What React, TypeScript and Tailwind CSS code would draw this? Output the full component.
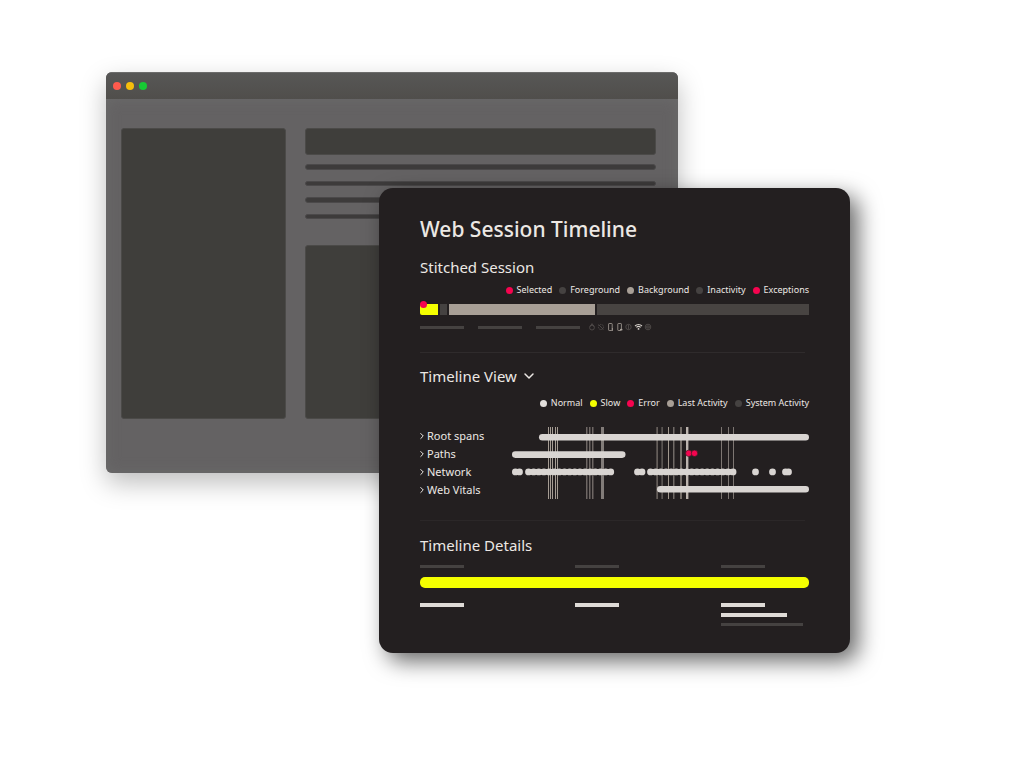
import { ChevronDown, ChevronRight } from "lucide-react";

const sessionLegend = [
  { label: "Selected", color: "bg-[#f5044f]" },
  { label: "Foreground", color: "bg-[#454241]" },
  { label: "Background", color: "bg-[#a89f96]" },
  { label: "Inactivity", color: "bg-[#454241]" },
  { label: "Exceptions", color: "bg-[#f5044f]" },
];

const timelineLegend = [
  { label: "Normal", color: "bg-[#e3dfdc]" },
  { label: "Slow", color: "bg-[#f4ff00]" },
  { label: "Error", color: "bg-[#f5044f]" },
  { label: "Last Activity", color: "bg-[#a89f96]" },
  { label: "System Activity", color: "bg-[#454241]" },
];

const tracks = ["Root spans", "Paths", "Network", "Web Vitals"];

// Vertical activity markers: x, width, color
const markers: [number, number, string][] = [
  [36, 1, "#a59c93"],
  [38, 1, "#a59c93"],
  [40, 1, "#a59c93"],
  [43, 1, "#a59c93"],
  [45, 1, "#a59c93"],
  [74, 1.5, "#6e6764"],
  [77, 1.5, "#6e6764"],
  [80, 1.5, "#6e6764"],
  [89, 3, "#827c79"],
  [144.5, 1.2, "#827a74"],
  [149.5, 1.2, "#716b67"],
  [156, 1, "#a1988e"],
  [161, 1.5, "#716b67"],
  [168, 2, "#756e69"],
  [174, 2.4, "#bcb4ae"],
  [209, 1, "#7d7672"],
  [216, 1, "#7d7672"],
  [221, 1, "#7d7672"],
];

// Centers of the network request beads
const beads = [
  3.4, 7.5,
  ...Array.from({ length: 17 }, (_, i) => 16.5 + i * 5.14),
  125.5, 130,
  ...Array.from({ length: 17 }, (_, i) => 138.5 + i * 5.16),
  243.5, 260.5, 273.5, 276.5,
];

const Legend = ({ items }: { items: { label: string; color: string }[] }) => (
  <ul className="flex justify-end gap-[7px] text-[9px] leading-3 whitespace-nowrap">
    {items.map((item) => (
      <li key={item.label} className="flex items-center gap-1">
        <span className={`size-[7px] rounded-full ${item.color}`} />
        {item.label}
      </li>
    ))}
  </ul>
);

const DeviceIcons = () => (
  <svg width="66" height="10" viewBox="0 0 66 10" fill="none" strokeWidth="0.8">
    <g stroke="#55514f">
      <path d="M2.2 4.6 4 1.6l2 3" />
      <circle cx="4" cy="5.6" r="2.4" />
      <circle cx="13" cy="5" r="2.6" strokeDasharray="1.4 0.8" />
      <path d="m10.5 2.5 5 5" />
      <circle cx="40.5" cy="5" r="2.7" />
      <path d="M40.5 2.6v4.8" />
      <circle cx="60" cy="5" r="2.8" />
      <path d="M58.8 4h2.4v2h-2.4z" />
    </g>
    <g stroke="#a9a29b">
      <rect x="20.6" y="1.5" width="3.6" height="7" rx="0.6" />
      <path d="M24.4 6v3" />
      <rect x="29.8" y="1.5" width="3.6" height="7" rx="0.6" />
      <path d="M32 7.6h2.4" strokeWidth="1.4" />
    </g>
    <path
      d="M47 4c2-1.9 5-1.9 7 0M48.4 5.4c1.2-1.1 3-1.1 4.2 0"
      stroke="#d6d0ca"
      strokeWidth="1.1"
    />
    <circle cx="50.5" cy="6.9" r="0.9" fill="#d6d0ca" />
  </svg>
);

const TimelineChart = () => (
  <svg viewBox="0 0 297 72" className="block w-full" aria-hidden="true">
    {markers.map(([x, width, color]) => (
      <rect key={x} x={x} y="0" width={width} height="72" fill={color} />
    ))}
    <g fill="#d9d5d2">
      <rect x="27" y="7" width="270" height="6.6" rx="3.3" />
      <rect x="0" y="24.3" width="113.5" height="6.6" rx="3.3" />
      <rect x="145" y="58.9" width="152" height="6.6" rx="3.3" />
      {beads.map((x) => (
        <circle key={x} cx={x} cy="44.9" r="3.4" />
      ))}
      {/* Join the beads of one burst */}
      <rect x="3" y="42" width="5" height="5.8" />
      <rect x="16" y="42" width="83" height="5.8" />
      <rect x="125" y="42" width="5" height="5.8" />
      <rect x="138" y="42" width="83" height="5.8" />
    </g>
    <g fill="#f5044f" stroke="#231f20" strokeWidth="0.6">
      <circle cx="176.8" cy="26.3" r="3.2" />
      <circle cx="182.5" cy="26.3" r="3.2" />
    </g>
  </svg>
);

const BrowserWindow = () => (
  <div className="col-start-1 col-end-3 row-start-1 row-end-3 flex flex-col overflow-hidden rounded-md bg-[#646263] shadow-[0_10px_26px_rgba(0,0,0,0.26)]">
    <div className="flex h-[27px] items-center gap-[5px] border-t border-[#6c6c6b] bg-linear-to-b from-[#575756] to-[#504e4b] px-[7px]">
      <span className="size-2 rounded-full bg-[#ff5a4d]" />
      <span className="size-2 rounded-full bg-[#f6bd0b]" />
      <span className="size-2 rounded-full bg-[#17c934]" />
    </div>
    <div className="grid flex-1 grid-cols-[165fr_350fr] gap-[19px] pt-[29px] pr-[22px] pb-[54px] pl-[15px] shadow-[inset_0_0_14px_#6b6b6b]">
      <div className="rounded-[3px] border border-[#4b4a48] bg-[#3f3e3b]" />
      <div className="flex flex-col">
        <div className="h-[27px] rounded-[3px] border border-[#4b4a48] bg-[#3f3e3b]" />
        <div className="mt-[9px] flex flex-col gap-[11px]">
          <div className="h-[6px] rounded-full border border-[#4b494a] bg-[#3d3b3b]" />
          <div className="h-[5px] rounded-full border border-[#4b494a] bg-[#3d3b3b]" />
          <div className="h-[6px] rounded-full border border-[#4b494a] bg-[#3d3b3b]" />
          <div className="h-[5px] rounded-full border border-[#4b494a] bg-[#3d3b3b]" />
        </div>
        <div className="mt-[26px] flex-1 rounded-[3px] border border-[#4b4a48] bg-[#3f3e3b]" />
      </div>
    </div>
  </div>
);

const SessionCard = () => (
  <section className="col-start-2 col-end-4 row-start-2 row-end-4 rounded-[14px] bg-[#231f20] px-[41px] pt-[27px] pb-[27px] text-[#ece8e4] shadow-[8px_8px_22px_rgba(0,0,0,0.6)]">
    <h1 className="text-[21px] leading-7 font-medium">Web Session Timeline</h1>

    <h2 className="mt-[14px] text-[15px] leading-5">Stitched Session</h2>
    <div className="mt-[7px]">
      <Legend items={sessionLegend} />
    </div>
    <div className="relative mt-2 flex h-[11px] gap-[2px]">
      <div className="w-[18px] rounded-l-[2px] bg-[#f4ff00]" />
      <div className="w-[7px] bg-[#454241]" />
      <div className="flex-[146] bg-[#a89f96]" />
      <div className="flex-[212] bg-[#484442]" />
      <span className="absolute -top-[3px] left-0 size-[7px] rounded-full bg-[#f5044f]" />
    </div>
    <div className="mt-[7px] flex h-[10px] items-center gap-[14px]">
      <div className="h-[3px] w-11 bg-[#454241]" />
      <div className="h-[3px] w-11 bg-[#454241]" />
      <div className="h-[3px] w-11 bg-[#454241]" />
      <div className="-ml-[6px]">
        <DeviceIcons />
      </div>
    </div>

    <hr className="mt-5 mr-1 border-[#2f2b2c]" />

    <h2 className="mt-[13px] text-[15px] leading-5">
      <button type="button" className="flex items-center gap-1">
        Timeline View
        <ChevronDown size={16} strokeWidth={2.2} />
      </button>
    </h2>
    <div className="mt-[11px]">
      <Legend items={timelineLegend} />
    </div>
    <div className="mt-[18px] grid grid-cols-[92fr_297fr]">
      <ul className="text-[11px] leading-[18px] whitespace-nowrap">
        {tracks.map((track) => (
          <li key={track}>
            <button type="button" className="-ml-[3px] flex items-center">
              <ChevronRight size={10} strokeWidth={2.4} />
              {track}
            </button>
          </li>
        ))}
      </ul>
      <TimelineChart />
    </div>

    <hr className="mt-[21px] mr-1 border-[#2b2728]" />

    <h2 className="mt-[14px] text-[15px] leading-5">Timeline Details</h2>
    <div className="mt-[10px] grid grid-cols-[155fr_146fr_88fr]">
      <div className="h-[3px] w-11 bg-[#454241]" />
      <div className="h-[3px] w-11 bg-[#454241]" />
      <div className="h-[3px] w-11 bg-[#454241]" />
    </div>
    <div className="mt-[9px] h-[11px] rounded-[5px] bg-[#f4ff00]" />
    <div className="mt-[15px] grid grid-cols-[155fr_146fr_88fr]">
      <div className="h-1 w-11 bg-[#dfdbd7]" />
      <div className="h-1 w-11 bg-[#dfdbd7]" />
      <div className="flex flex-col gap-[6px]">
        <div className="h-1 w-11 bg-[#dfdbd7]" />
        <div className="h-1 w-[66px] bg-[#dfdbd7]" />
        <div className="h-[3px] w-[82px] bg-[#454241]" />
      </div>
    </div>
  </section>
);

export default function App() {
  return (
    <main className="min-h-screen bg-white pt-[72px] pr-[174px] pl-[106px] font-['Noto_Sans',sans-serif]">
      <div className="grid grid-cols-[273fr_299fr_172fr] grid-rows-[116px_285px_auto]">
        <BrowserWindow />
        <SessionCard />
      </div>
    </main>
  );
}
